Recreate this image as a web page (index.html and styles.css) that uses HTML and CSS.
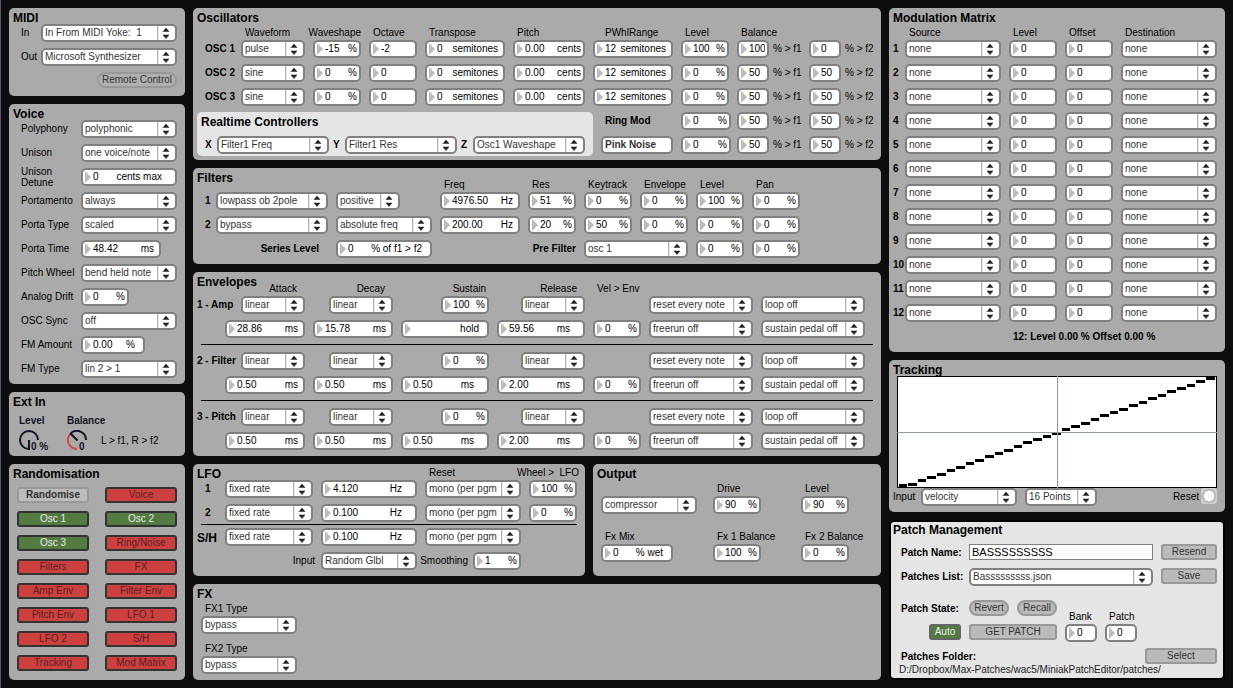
FILE: index.html
```html
<!DOCTYPE html>
<html lang="en">
<head>
<meta charset="utf-8">
<title>Miniak Patch Editor</title>
<link rel="stylesheet" href="styles.css">
</head>
<body>
<main class="editor">

<div class="column">
  <section class="panel midi">
    <h2>MIDI</h2>
    <div class="midi-row"><label for="midi-in">In</label><select id="midi-in" class="sel"><option>In From MIDI Yoke:&nbsp; 1</option></select></div>
    <div class="midi-row"><label for="midi-out">Out</label><select id="midi-out" class="sel"><option>Microsoft Synthesizer</option></select></div>
    <div class="midi-remote"><button class="btn pill w80">Remote Control</button></div>
  </section>

  <section class="panel voice">
    <h2>Voice</h2>
    <div class="voice-grid">
      <label for="v1">Polyphony</label><select id="v1" class="sel"><option>polyphonic</option></select>
      <label for="v2">Unison</label><select id="v2" class="sel"><option>one voice/note</option></select>
      <label for="v3" class="two-line">Unison Detune</label><span class="num wide"><input id="v3" value="0"><i>cents max</i></span>
      <label for="v4">Portamento</label><select id="v4" class="sel"><option>always</option></select>
      <label for="v5">Porta Type</label><select id="v5" class="sel"><option>scaled</option></select>
      <label for="v6">Porta Time</label><span class="num mid w80"><input id="v6" value="48.42"><i>ms</i></span>
      <label for="v7">Pitch Wheel</label><select id="v7" class="sel"><option>bend held note</option></select>
      <label for="v8">Analog Drift</label><span class="num w48"><input id="v8" value="0"><i>%</i></span>
      <label for="v9">OSC Sync</label><select id="v9" class="sel"><option>off</option></select>
      <label for="v10">FM Amount</label><span class="num high w64"><input id="v10" value="0.00"><i>%</i></span>
      <label for="v11">FM Type</label><select id="v11" class="sel"><option>lin 2 &gt; 1</option></select>
    </div>
  </section>

  <section class="panel ext">
    <h2>Ext In</h2>
    <div class="ext-row">
      <div class="dial">
        <span>Level</span>
        <div class="dial-face">
          <svg width="22" height="22" viewBox="0 0 22 22" aria-hidden="true"><path d="M10 19A9 9 0 1 1 19 10" fill="none" stroke="#101424" stroke-width="2"/><path d="M10 10V20" stroke="#101424" stroke-width="2"/></svg>
          <output>0 %</output>
        </div>
      </div>
      <div class="dial">
        <span>Balance</span>
        <div class="dial-face">
          <svg width="22" height="22" viewBox="0 0 22 22" aria-hidden="true"><path d="M10 19A9 9 0 0 1 3.6 3.6" fill="none" stroke="#d84444" stroke-width="2"/><path d="M3.6 3.6A9 9 0 0 1 19 10M3.2 3.2L10.5 10.5" fill="none" stroke="#101424" stroke-width="2"/></svg>
          <output>0</output>
        </div>
      </div>
      <p>L &gt; f1, R &gt; f2</p>
    </div>
  </section>

  <section class="panel random">
    <h2>Randomisation</h2>
    <div class="random-grid">
      <button class="btn strong">Randomise</button><button class="btn off">Voice</button>
      <button class="btn on">Osc 1</button><button class="btn on">Osc 2</button>
      <button class="btn on">Osc 3</button><button class="btn off">Ring/Noise</button>
      <button class="btn off">Filters</button><button class="btn off">FX</button>
      <button class="btn off">Amp Env</button><button class="btn off">Filter Env</button>
      <button class="btn off">Pitch Env</button><button class="btn off">LFO 1</button>
      <button class="btn off">LFO 2</button><button class="btn off">S/H</button>
      <button class="btn off">Tracking</button><button class="btn off">Mod Matrix</button>
    </div>
  </section>
</div>

<div class="column">
  <section class="panel osc">
    <div class="osc-grid">
      <h2>Oscillators</h2>
      <span class="head">Waveform</span><span class="head flush">Waveshape</span><span class="head">Octave</span><span class="head">Transpose</span><span class="head">Pitch</span><span class="head inset">PWhlRange</span><span class="head">Level</span><span class="head span-two">Balance</span>

      <b class="row-name">OSC 1</b>
      <select class="sel" aria-label="OSC 1 waveform"><option>pulse</option></select>
      <label class="num"><input aria-label="OSC 1 waveshape" value="-15"><i>%</i></label>
      <label class="num"><input aria-label="OSC 1 octave" value="-2"></label>
      <label class="num mid"><input aria-label="OSC 1 transpose" value="0"><i>semitones</i></label>
      <label class="num"><input aria-label="OSC 1 pitch" value="0.00"><i>cents</i></label>
      <label class="num mid"><input aria-label="OSC 1 pitch wheel range" value="12"><i>semitones</i></label>
      <label class="num"><input aria-label="OSC 1 level" value="100"><i>%</i></label>
      <label class="pair"><span class="num w32"><input value="100"></span>% &gt; f1</label>
      <label class="pair"><span class="num w32"><input value="0"></span>% &gt; f2</label>

      <b class="row-name">OSC 2</b>
      <select class="sel" aria-label="OSC 2 waveform"><option>sine</option></select>
      <label class="num"><input aria-label="OSC 2 waveshape" value="0"><i>%</i></label>
      <label class="num"><input aria-label="OSC 2 octave" value="0"></label>
      <label class="num mid"><input aria-label="OSC 2 transpose" value="0"><i>semitones</i></label>
      <label class="num"><input aria-label="OSC 2 pitch" value="0.00"><i>cents</i></label>
      <label class="num mid"><input aria-label="OSC 2 pitch wheel range" value="12"><i>semitones</i></label>
      <label class="num"><input aria-label="OSC 2 level" value="0"><i>%</i></label>
      <label class="pair"><span class="num w32"><input value="50"></span>% &gt; f1</label>
      <label class="pair"><span class="num w32"><input value="50"></span>% &gt; f2</label>

      <b class="row-name">OSC 3</b>
      <select class="sel" aria-label="OSC 3 waveform"><option>sine</option></select>
      <label class="num"><input aria-label="OSC 3 waveshape" value="0"><i>%</i></label>
      <label class="num"><input aria-label="OSC 3 octave" value="0"></label>
      <label class="num mid"><input aria-label="OSC 3 transpose" value="0"><i>semitones</i></label>
      <label class="num"><input aria-label="OSC 3 pitch" value="0.00"><i>cents</i></label>
      <label class="num mid"><input aria-label="OSC 3 pitch wheel range" value="12"><i>semitones</i></label>
      <label class="num"><input aria-label="OSC 3 level" value="0"><i>%</i></label>
      <label class="pair"><span class="num w32"><input value="50"></span>% &gt; f1</label>
      <label class="pair"><span class="num w32"><input value="50"></span>% &gt; f2</label>

      <div class="realtime">
        <h2>Realtime Controllers</h2>
        <div class="realtime-row">
          <label for="rx">X</label><select id="rx" class="sel w112"><option>Filter1 Freq</option></select>
          <label for="ry">Y</label><select id="ry" class="sel w112"><option>Filter1 Res</option></select>
          <label for="rz">Z</label><select id="rz" class="sel w112"><option>Osc1 Waveshape</option></select>
        </div>
      </div>

      <b class="row-name inset">Ring Mod</b>
      <label class="num w50"><input aria-label="Ring mod level" value="0"><i>%</i></label>
      <label class="pair"><span class="num w32"><input value="50"></span>% &gt; f1</label>
      <label class="pair"><span class="num w32"><input value="50"></span>% &gt; f2</label>

      <select class="sel plain w72" aria-label="Noise type"><option>Pink Noise</option></select>
      <label class="num w50"><input aria-label="Noise level" value="0"><i>%</i></label>
      <label class="pair"><span class="num w32"><input value="50"></span>% &gt; f1</label>
      <label class="pair"><span class="num w32"><input value="50"></span>% &gt; f2</label>
    </div>
  </section>

  <section class="panel filters">
    <div class="filter-grid">
      <h2>Filters</h2>
      <span class="head at-freq">Freq</span><span class="head">Res</span><span class="head">Keytrack</span><span class="head">Envelope</span><span class="head">Level</span><span class="head">Pan</span>

      <b class="row-name">1</b>
      <select class="sel" aria-label="Filter 1 type"><option>lowpass ob 2pole</option></select>
      <select class="sel w64" aria-label="Filter 1 polarity"><option>positive</option></select>
      <label class="num mid"><input aria-label="Filter 1 frequency" value="4976.50"><i>Hz</i></label>
      <label class="num"><input aria-label="Filter 1 resonance" value="51"><i>%</i></label>
      <label class="num"><input aria-label="Filter 1 keytrack" value="0"><i>%</i></label>
      <label class="num"><input aria-label="Filter 1 envelope" value="0"><i>%</i></label>
      <label class="num"><input aria-label="Filter 1 level" value="100"><i>%</i></label>
      <label class="num"><input aria-label="Filter 1 pan" value="0"><i>%</i></label>

      <b class="row-name">2</b>
      <select class="sel" aria-label="Filter 2 type"><option>bypass</option></select>
      <select class="sel" aria-label="Filter 2 offset"><option>absolute freq</option></select>
      <label class="num mid"><input aria-label="Filter 2 frequency" value="200.00"><i>Hz</i></label>
      <label class="num"><input aria-label="Filter 2 resonance" value="20"><i>%</i></label>
      <label class="num"><input aria-label="Filter 2 keytrack" value="50"><i>%</i></label>
      <label class="num"><input aria-label="Filter 2 envelope" value="0"><i>%</i></label>
      <label class="num"><input aria-label="Filter 2 level" value="0"><i>%</i></label>
      <label class="num"><input aria-label="Filter 2 pan" value="0"><i>%</i></label>

      <label for="series" class="series-name">Series Level</label>
      <span class="num high"><input id="series" value="0"><i>% of f1 &gt; f2</i></span>
      <label for="prefilter" class="pre-name">Pre Filter</label>
      <select id="prefilter" class="sel span-two"><option>osc 1</option></select>
      <label class="num"><input aria-label="Pre filter level" value="0"><i>%</i></label>
      <label class="num"><input aria-label="Pre filter pan" value="0"><i>%</i></label>
    </div>
  </section>

  <section class="panel envelopes">
    <div class="env-grid">
      <h2>Envelopes</h2>
      <span class="head right">Attack</span><span class="head right">Decay</span><span class="head right tight">Sustain</span><span class="head right">Release</span><span class="head">Vel &gt; Env</span>
    </div>
    <div class="env-grid">
      <b class="row-name flat">1 - Amp</b>
      <select class="sel w64 end" aria-label="Amp attack curve"><option>linear</option></select>
      <select class="sel w64 end" aria-label="Amp decay curve"><option>linear</option></select>
      <label class="num w48 end"><input aria-label="Amp sustain" value="100"><i>%</i></label>
      <select class="sel w64 end" aria-label="Amp release curve"><option>linear</option></select>
      <select class="sel at-reset" aria-label="Amp reset"><option>reset every note</option></select>
      <select class="sel" aria-label="Amp loop"><option>loop off</option></select>
      <label class="num mid at-attack"><input aria-label="Amp attack time" value="28.86"><i>ms</i></label>
      <label class="num mid"><input aria-label="Amp decay time" value="15.78"><i>ms</i></label>
      <label class="num high"><input aria-label="Amp sustain time" value=""><i>hold</i></label>
      <label class="num wide"><input aria-label="Amp release time" value="59.56"><i>ms</i></label>
      <label class="num"><input aria-label="Amp velocity" value="0"><i>%</i></label>
      <select class="sel" aria-label="Amp freerun"><option>freerun off</option></select>
      <select class="sel" aria-label="Amp sustain pedal"><option>sustain pedal off</option></select>
    </div>
    <hr>
    <div class="env-grid">
      <b class="row-name flat">2 - Filter</b>
      <select class="sel w64 end" aria-label="Filter attack curve"><option>linear</option></select>
      <select class="sel w64 end" aria-label="Filter decay curve"><option>linear</option></select>
      <label class="num w48 end"><input aria-label="Filter sustain" value="0"><i>%</i></label>
      <select class="sel w64 end" aria-label="Filter release curve"><option>linear</option></select>
      <select class="sel at-reset" aria-label="Filter reset"><option>reset every note</option></select>
      <select class="sel" aria-label="Filter loop"><option>loop off</option></select>
      <label class="num mid at-attack"><input aria-label="Filter attack time" value="0.50"><i>ms</i></label>
      <label class="num mid"><input aria-label="Filter decay time" value="0.50"><i>ms</i></label>
      <label class="num wide"><input aria-label="Filter sustain time" value="0.50"><i>ms</i></label>
      <label class="num wide"><input aria-label="Filter release time" value="2.00"><i>ms</i></label>
      <label class="num"><input aria-label="Filter velocity" value="0"><i>%</i></label>
      <select class="sel" aria-label="Filter freerun"><option>freerun off</option></select>
      <select class="sel" aria-label="Filter sustain pedal"><option>sustain pedal off</option></select>
    </div>
    <hr>
    <div class="env-grid">
      <b class="row-name flat">3 - Pitch</b>
      <select class="sel w64 end" aria-label="Pitch attack curve"><option>linear</option></select>
      <select class="sel w64 end" aria-label="Pitch decay curve"><option>linear</option></select>
      <label class="num w48 end"><input aria-label="Pitch sustain" value="0"><i>%</i></label>
      <select class="sel w64 end" aria-label="Pitch release curve"><option>linear</option></select>
      <select class="sel at-reset" aria-label="Pitch reset"><option>reset every note</option></select>
      <select class="sel" aria-label="Pitch loop"><option>loop off</option></select>
      <label class="num mid at-attack"><input aria-label="Pitch attack time" value="0.50"><i>ms</i></label>
      <label class="num mid"><input aria-label="Pitch decay time" value="0.50"><i>ms</i></label>
      <label class="num wide"><input aria-label="Pitch sustain time" value="0.50"><i>ms</i></label>
      <label class="num wide"><input aria-label="Pitch release time" value="2.00"><i>ms</i></label>
      <label class="num"><input aria-label="Pitch velocity" value="0"><i>%</i></label>
      <select class="sel" aria-label="Pitch freerun"><option>freerun off</option></select>
      <select class="sel" aria-label="Pitch sustain pedal"><option>sustain pedal off</option></select>
    </div>
  </section>

  <div class="split">
    <section class="panel lfo">
      <div class="lfo-grid lfo-head">
        <h2>LFO</h2>
        <span class="head at-lfo-reset">Reset</span><span class="head flush">Wheel &gt;&nbsp; LFO</span>
      </div>
      <div class="lfo-grid">
        <b class="row-name">1</b>
        <select class="sel" aria-label="LFO 1 mode"><option>fixed rate</option></select>
        <label class="num wide"><input aria-label="LFO 1 rate" value="4.120"><i>Hz</i></label>
        <select class="sel" aria-label="LFO 1 reset"><option>mono (per pgm</option></select>
        <label class="num"><input aria-label="LFO 1 wheel" value="100"><i>%</i></label>
        <b class="row-name">2</b>
        <select class="sel" aria-label="LFO 2 mode"><option>fixed rate</option></select>
        <label class="num wide"><input aria-label="LFO 2 rate" value="0.100"><i>Hz</i></label>
        <select class="sel" aria-label="LFO 2 reset"><option>mono (per pgm</option></select>
        <label class="num"><input aria-label="LFO 2 wheel" value="0"><i>%</i></label>
      </div>
      <hr>
      <div class="lfo-grid">
        <h2>S/H</h2>
        <select class="sel" aria-label="S/H mode"><option>fixed rate</option></select>
        <label class="num wide"><input aria-label="S/H rate" value="0.100"><i>Hz</i></label>
        <select class="sel" aria-label="S/H reset"><option>mono (per pgm</option></select>
        <label for="sh-input" class="sh-name">Input</label>
        <select id="sh-input" class="sel"><option>Random Glbl</option></select>
        <label class="smoothing">Smoothing<span class="num w48"><input value="1"><i>%</i></span></label>
      </div>
    </section>

    <section class="panel output">
      <h2>Output</h2>
      <div class="output-grid">
        <span></span><label for="o1" class="head">Drive</label><label for="o2" class="head">Level</label>
        <select class="sel" aria-label="Output effect"><option>compressor</option></select>
        <span class="num w48"><input id="o1" value="90"><i>%</i></span>
        <span class="num w48"><input id="o2" value="90"><i>%</i></span>
        <label for="o3" class="head">Fx Mix</label><label for="o4" class="head">Fx 1 Balance</label><label for="o5" class="head">Fx 2 Balance</label>
        <span class="num high w72"><input id="o3" value="0"><i>% wet</i></span>
        <span class="num w48"><input id="o4" value="100"><i>%</i></span>
        <span class="num w48"><input id="o5" value="0"><i>%</i></span>
      </div>
    </section>
  </div>

  <section class="panel fx">
    <h2>FX</h2>
    <div class="fx-list">
      <label for="fx1" class="head">FX1 Type</label><select id="fx1" class="sel"><option>bypass</option></select>
      <label for="fx2" class="head">FX2 Type</label><select id="fx2" class="sel"><option>bypass</option></select>
    </div>
  </section>
</div>

<div class="column">
  <section class="panel matrix">
    <h2>Modulation Matrix</h2>
    <table>
      <colgroup><col class="c-num"><col class="c-src"><col class="c-val"><col class="c-val"><col></colgroup>
      <thead><tr><td></td><th>Source</th><th>Level</th><th>Offset</th><th>Destination</th></tr></thead>
      <tbody>
        <tr><th>1</th><td><select class="sel" aria-label="Source 1"><option>none</option></select></td><td><label class="num"><input aria-label="Level 1" value="0"></label></td><td><label class="num"><input aria-label="Offset 1" value="0"></label></td><td><select class="sel" aria-label="Destination 1"><option>none</option></select></td></tr>
        <tr><th>2</th><td><select class="sel" aria-label="Source 2"><option>none</option></select></td><td><label class="num"><input aria-label="Level 2" value="0"></label></td><td><label class="num"><input aria-label="Offset 2" value="0"></label></td><td><select class="sel" aria-label="Destination 2"><option>none</option></select></td></tr>
        <tr><th>3</th><td><select class="sel" aria-label="Source 3"><option>none</option></select></td><td><label class="num"><input aria-label="Level 3" value="0"></label></td><td><label class="num"><input aria-label="Offset 3" value="0"></label></td><td><select class="sel" aria-label="Destination 3"><option>none</option></select></td></tr>
        <tr><th>4</th><td><select class="sel" aria-label="Source 4"><option>none</option></select></td><td><label class="num"><input aria-label="Level 4" value="0"></label></td><td><label class="num"><input aria-label="Offset 4" value="0"></label></td><td><select class="sel" aria-label="Destination 4"><option>none</option></select></td></tr>
        <tr><th>5</th><td><select class="sel" aria-label="Source 5"><option>none</option></select></td><td><label class="num"><input aria-label="Level 5" value="0"></label></td><td><label class="num"><input aria-label="Offset 5" value="0"></label></td><td><select class="sel" aria-label="Destination 5"><option>none</option></select></td></tr>
        <tr><th>6</th><td><select class="sel" aria-label="Source 6"><option>none</option></select></td><td><label class="num"><input aria-label="Level 6" value="0"></label></td><td><label class="num"><input aria-label="Offset 6" value="0"></label></td><td><select class="sel" aria-label="Destination 6"><option>none</option></select></td></tr>
        <tr><th>7</th><td><select class="sel" aria-label="Source 7"><option>none</option></select></td><td><label class="num"><input aria-label="Level 7" value="0"></label></td><td><label class="num"><input aria-label="Offset 7" value="0"></label></td><td><select class="sel" aria-label="Destination 7"><option>none</option></select></td></tr>
        <tr><th>8</th><td><select class="sel" aria-label="Source 8"><option>none</option></select></td><td><label class="num"><input aria-label="Level 8" value="0"></label></td><td><label class="num"><input aria-label="Offset 8" value="0"></label></td><td><select class="sel" aria-label="Destination 8"><option>none</option></select></td></tr>
        <tr><th>9</th><td><select class="sel" aria-label="Source 9"><option>none</option></select></td><td><label class="num"><input aria-label="Level 9" value="0"></label></td><td><label class="num"><input aria-label="Offset 9" value="0"></label></td><td><select class="sel" aria-label="Destination 9"><option>none</option></select></td></tr>
        <tr><th>10</th><td><select class="sel" aria-label="Source 10"><option>none</option></select></td><td><label class="num"><input aria-label="Level 10" value="0"></label></td><td><label class="num"><input aria-label="Offset 10" value="0"></label></td><td><select class="sel" aria-label="Destination 10"><option>none</option></select></td></tr>
        <tr><th>11</th><td><select class="sel" aria-label="Source 11"><option>none</option></select></td><td><label class="num"><input aria-label="Level 11" value="0"></label></td><td><label class="num"><input aria-label="Offset 11" value="0"></label></td><td><select class="sel" aria-label="Destination 11"><option>none</option></select></td></tr>
        <tr><th>12</th><td><select class="sel" aria-label="Source 12"><option>none</option></select></td><td><label class="num"><input aria-label="Level 12" value="0"></label></td><td><label class="num"><input aria-label="Offset 12" value="0"></label></td><td><select class="sel" aria-label="Destination 12"><option>none</option></select></td></tr>
      </tbody>
    </table>
    <p class="readout">12: Level 0.00 % Offset 0.00 %</p>
  </section>

  <section class="panel tracking">
    <h2>Tracking</h2>
    <svg class="graph" viewBox="0 0 320 112" role="img" aria-label="Tracking curve">
      <rect x="0.5" y="0.5" width="319" height="111" fill="#fff" stroke="#000"/>
      <path fill="none" stroke="#000" stroke-width="3" d="M2 109.5h8M11 108.5h9M21 104.5h8M30 101.5h9M40 98.5h9M50 94.5h8M59 91.5h9M69 87.5h8M78 84.5h9M88 80.5h9M98 77.5h8M107 74.5h9M117 70.5h8M126 66.5h9M136 63.5h9M146 60.5h8M155 57.5h9M165 53.5h8M174 50.5h9M184 47.5h9M194 43.5h8M203 39.5h9M213 36.5h8M222 33.5h9M232 29.5h9M242 26.5h8M251 22.5h9M261 19.5h8M270 15.5h9M280 12.5h9M290 9.5h8M299 5.5h9M309 2.5h9"/>
      <path fill="none" stroke="#8e9aa6" d="M0 56.5H320M160.5 0V112"/>
    </svg>
    <div class="track-row">
      <label for="t1">Input</label><select id="t1" class="sel w96"><option>velocity</option></select>
      <select class="sel w72" aria-label="Points"><option>16 Points</option></select>
      <label for="t-reset" class="reset-name">Reset</label><button id="t-reset" class="bang" aria-label="Reset"></button>
    </div>
  </section>

  <section class="panel patch">
    <h2>Patch Management</h2>
    <div class="patch-grid">
      <label for="p1">Patch Name:</label><input id="p1" class="text" value="BASSSSSSSSS"><button class="btn">Resend</button>
      <label for="p2">Patches List:</label><select id="p2" class="sel"><option>Basssssssss.json</option></select><button class="btn">Save</button>
    </div>
    <div class="state-row">
      <div class="state-name"><b>Patch State:</b><button class="btn on auto w32">Auto</button></div>
      <div class="state-buttons">
        <button class="btn pill">Revert</button><button class="btn pill">Recall</button>
        <button class="btn get">GET PATCH</button>
      </div>
      <div class="state-field"><label for="p3" class="head">Bank</label><span class="num w32"><input id="p3" value="0"></span></div>
      <div class="state-field"><label for="p4" class="head">Patch</label><span class="num w32"><input id="p4" value="0"></span></div>
    </div>
    <div class="folder-row"><b>Patches Folder:</b><button class="btn w72">Select</button></div>
    <p class="folder-path">D:/Dropbox/Max-Patches/wac5/MiniakPatchEditor/patches/</p>
  </section>
</div>

</main>
</body>
</html>
```

FILE: styles.css
```css
* { box-sizing: border-box; }

body {
  margin: 0;
  min-height: 100vh;
  background: #0d0d0d;
  border-left: 1px solid #55556f;
  color: #000;
  font: 10px/18px "Liberation Sans", Arial, sans-serif;
}

button, input, select { font: inherit; color: inherit; margin: 0; }
p { margin: 0; }

h2 {
  margin: 0;
  height: 16px;
  padding-top: 3px;
  font-size: 12px;
  line-height: 14px;
  font-weight: bold;
  white-space: nowrap;
}

hr { height: 1px; margin: 0; border: 0; background: #000; }

.editor {
  display: grid;
  grid-template-columns: 176px minmax(688px, 1fr) 336px;
  gap: 8px;
  padding: 8px;
}

.column { display: flex; flex-direction: column; gap: 8px; min-width: 0; }

.panel {
  background: #aaa;
  border-radius: 5px;
  padding: 0 8px 0 4px;
}

/* Controls */

.sel {
  appearance: none;
  width: 100%;
  height: 18px;
  padding: 0 19px 0 2px;
  border: 2px solid #808080;
  border-radius: 5px;
  color: #333;
  line-height: 14px;
  background: #fff url("data:image/svg+xml,%3Csvg xmlns='http://www.w3.org/2000/svg' width='18' height='14'%3E%3Cpath d='M.5 0V14' stroke='%23b0b0b0' stroke-width='1.5'/%3E%3Cpath d='M9 2L12 5.5H6zM9 12.5L12 9H6z' fill='%23222' stroke='%23222' stroke-width='.5'/%3E%3C/svg%3E") right center no-repeat;
}

.sel.plain {
  justify-self: end;
  padding-right: 2px;
  background: #fff;
  font-weight: bold;
}

.num {
  display: flex;
  align-items: center;
  width: 100%;
  height: 18px;
  padding: 0 2px;
  border: 2px solid #808080;
  border-radius: 5px;
  background: #fff;
  line-height: 14px;
}

.num::before {
  content: "";
  flex: none;
  width: 6px;
  height: 12px;
  background: #bbb;
  clip-path: polygon(0 0, 100% 50%, 0 100%);
}

.num input {
  flex: 1;
  min-width: 0;
  width: 0;
  height: 14px;
  padding: 0 0 0 2px;
  border: 0;
  outline: 0;
  background: none;
}

.num i { font-style: normal; white-space: nowrap; }
.num.mid { padding-right: 5px; }
.num.high { padding-right: 8px; }
.num.wide { padding-right: 13px; }

.btn {
  height: 16px;
  padding: 0;
  border: 2px solid #999;
  border-radius: 3px;
  background: #bbb;
  color: #333;
  line-height: 12px;
  text-align: center;
  white-space: nowrap;
}

.btn.strong { font-weight: bold; }
.btn.pill { border-radius: 8px; }
.btn.on { border-color: #333; background: #537a41; color: #eee; }
.btn.off { border-color: #333; background: #cc4040; color: #5c1f1f; }
.btn.auto { border-color: #666; }

.w32 { width: 32px; flex: none; }
.w48 { width: 48px; flex: none; }
.w50 { width: 50px; }
.w64 { width: 64px; }
.w72 { width: 72px; flex: none; }
.w80 { width: 80px; }
.w96 { width: 96px; flex: none; }
.w112 { width: 112px; flex: none; }
.end { justify-self: end; }
.span-two { grid-column: span 2; }

.head { align-self: end; height: 16px; padding-left: 4px; line-height: 18px; white-space: nowrap; }
.head.flush { justify-self: end; padding-left: 0; }
.head.right { justify-self: end; padding: 0 8px 0 0; }
.head.right.tight { padding-right: 3px; }
.head.inset { padding-left: 12px; }

.row-name { padding-left: 8px; white-space: nowrap; }
.row-name.flat { padding-left: 0; }
.row-name.inset { padding-left: 12px; }

/* MIDI */

.midi { padding-bottom: 8px; }
.midi-row {
  display: grid;
  grid-template-columns: 20px 1fr;
  padding-left: 8px;
  height: 24px;
}
.midi-remote { display: flex; justify-content: flex-end; }
.midi .pill { background: #b0b0b0; }

/* Voice */

.voice-grid {
  display: grid;
  grid-template-columns: 60px 1fr;
  grid-auto-rows: 24px;
  padding-left: 8px;
}
.two-line { width: 40px; line-height: 11px; margin-top: -2px; }

/* External input */

.ext-row { display: flex; height: 48px; padding: 4px 0 0 6px; }
.dial { width: 48px; color: #101424; font-weight: bold; line-height: 18px; }
.dial-face { display: flex; height: 22px; }
.dial-face svg { flex: none; margin-right: -10px; }
.dial-face output { padding-top: 8px; line-height: 18px; white-space: nowrap; }
.ext-row p { margin-left: -14px; padding-top: 20px; white-space: nowrap; }

/* Randomisation */

.random-grid {
  display: grid;
  grid-template-columns: 1fr 1fr;
  gap: 8px 16px;
  padding: 7px 0 9px 4px;
}

/* Oscillators */

.osc-grid {
  display: grid;
  grid-template-columns: 36px 64px 48px 48px 80px 72px 80px 48px 64px 64px;
  grid-template-rows: 32px;
  grid-auto-rows: 24px;
  column-gap: 8px;
}
.pair { display: flex; gap: 4px; white-space: nowrap; }

.realtime {
  grid-column: 1 / 7;
  grid-row: 5 / 7;
  height: 44px;
  margin-right: -8px;
  padding-left: 4px;
  border-radius: 5px;
  background: #e5e5e5;
}
.realtime-row { display: flex; padding: 8px 8px 0 4px; }
.realtime-row label { width: 12px; font-weight: bold; }
.realtime-row .sel + label { width: 16px; padding-left: 4px; }

/* Filters */

.filter-grid {
  display: grid;
  grid-template-columns: 11px 112px 96px 80px repeat(5, 48px);
  grid-template-rows: 24px;
  grid-auto-rows: 24px;
  column-gap: 8px;
}
.at-freq { grid-column: 4; }
.series-name, .pre-name { grid-column: span 2; text-align: right; font-weight: bold; }
.series-name { padding-right: 9px; }

/* Envelopes */

.env-grid {
  display: grid;
  grid-template-columns: 20px 80px 80px 88px 88px 48px 104px 104px;
  grid-auto-rows: 24px;
  column-gap: 8px;
}
.envelopes hr { margin: 0 0 7px 4px; }
.at-reset { grid-column-start: 7; }
.at-attack { grid-column-start: 2; }

/* LFO and output */

.split { display: grid; grid-template-columns: 392px 1fr; gap: 8px; }

.lfo-grid {
  display: grid;
  grid-template-columns: 20px 88px 96px 96px 48px;
  grid-auto-rows: 24px;
  column-gap: 8px;
}
.lfo-head { grid-auto-rows: 16px; }
.lfo-head .flush { margin-right: -2px; }
.at-lfo-reset { grid-column: 4; }
.lfo hr { margin: -4px 0 3px 4px; }
.sh-name { grid-column: 1 / 3; margin-right: -2px; text-align: right; }
.smoothing { display: flex; justify-content: flex-end; gap: 5px; }

.output-grid {
  display: grid;
  grid-template-columns: 96px 72px 72px;
  grid-template-rows: 16px 32px 16px 32px;
  column-gap: 16px;
  padding-left: 4px;
}

/* FX */

.fx-list {
  display: grid;
  grid-template-columns: 96px;
  grid-template-rows: 16px 24px 16px 24px;
  padding-left: 4px;
}

/* Modulation matrix */

.matrix { padding-bottom: 6px; }
.matrix table { width: 100%; table-layout: fixed; border-collapse: collapse; }
.c-num { width: 12px; }
.c-src { width: 104px; }
.c-val { width: 56px; }
.matrix td, .matrix th { padding: 0 8px 0 0; text-align: left; vertical-align: top; }
.matrix td:last-child { padding-right: 0; }
.matrix tbody tr { height: 24px; }
.matrix tbody th { padding: 0; }
.matrix thead th { height: 16px; padding: 1px 0 0 4px; line-height: 15px; font-weight: normal; }
.matrix thead td { line-height: 15px; }
.matrix .sel { display: block; }
.readout { padding-left: 120px; font-weight: bold; }

/* Tracking */

.graph { display: block; width: calc(100% - 4px); margin-left: 4px; }
.track-row { display: flex; height: 24px; }
.track-row label { width: 28px; }
.track-row .sel + .sel { margin-left: 8px; }
.track-row .reset-name { width: auto; margin-left: auto; padding-right: 2px; }
.bang {
  width: 16px;
  height: 16px;
  padding: 0;
  border: 0;
  border-radius: 3px;
  background: radial-gradient(circle, #fff 5px, #999 6px, #ccc 7px);
}

/* Patch management */

.patch {
  padding: 0 6px 0 2px;
  border: 2px solid #000;
  background: #e5e5e5;
}
.patch h2 { height: 22px; padding-top: 1px; }
.patch-grid {
  display: grid;
  grid-template-columns: 60px 1fr 56px;
  grid-auto-rows: 24px;
  column-gap: 8px;
  padding-left: 8px;
}
.patch-grid label, .patch b { font-weight: bold; white-space: nowrap; }
.text {
  min-width: 0;
  height: 16px;
  padding: 0 2px;
  border: 1px solid #808080;
  background: #fff;
  font-size: 11px;
}
.state-row { display: flex; gap: 8px; padding: 8px 0 0 8px; height: 56px; }
.state-name { display: flex; flex-direction: column; gap: 6px; width: 60px; align-items: flex-end; }
.state-name b { align-self: flex-start; }
.state-buttons {
  display: grid;
  grid-template-columns: 40px 40px;
  grid-auto-rows: 16px;
  gap: 8px;
}
.get { grid-column: 1 / 3; }
.state-field { display: flex; flex-direction: column; width: 32px; padding-top: 8px; }
.state-field .head { align-self: flex-start; }
.folder-row { display: flex; justify-content: space-between; height: 14px; padding-left: 8px; }
.folder-path { padding-left: 6px; line-height: 16px; color: #222; }
```
